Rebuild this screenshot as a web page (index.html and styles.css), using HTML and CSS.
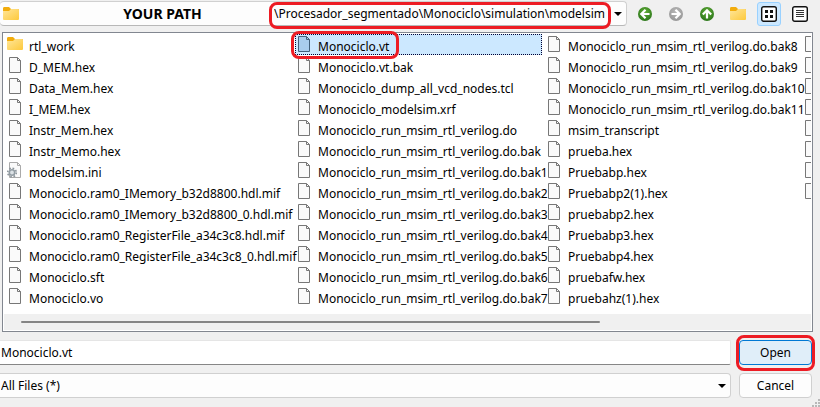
FILE: index.html
```
<!DOCTYPE html>
<html lang="en">
<head>
<meta charset="utf-8">
<title>Open file</title>
<link rel="stylesheet" href="styles.css">
</head>
<body>
<svg class="sprite" aria-hidden="true">
  <defs>
    <linearGradient id="gold" x1="0" y1="0" x2="1" y2="1"><stop offset="0" stop-color="#ffe69a"/><stop offset="1" stop-color="#fdc93c"/></linearGradient>
    <radialGradient id="green" cx=".5" cy=".35" r=".6"><stop offset="0" stop-color="#62ae38"/><stop offset="1" stop-color="#2f7a1c"/></radialGradient>
    <radialGradient id="gray" cx=".5" cy=".35" r=".6"><stop offset="0" stop-color="#b8b8b8"/><stop offset="1" stop-color="#9a9a9a"/></radialGradient>
  </defs>
  <symbol id="folder" viewBox="0 0 16 16"><path d="M0 2.500Q0 1 1 1H6L8 3H15Q16 3 16 4V7H0Z" fill="#f2ac0c"/><path d="M0 5H6L8 3H15Q16 3 16 4V13Q16 14 15 14H1Q0 14 0 13Z" fill="url(#gold)"/></symbol>
  <symbol id="file" viewBox="0 0 16 16"><path d="M2.500 .5H10.500L13.500 3.500V15.500H2.500Z" fill="#fafafa" stroke="#777" stroke-width="1"/><path d="M10.500 .5V3.500H13.500" fill="none" stroke="#777"/></symbol>
  <symbol id="file-selected" viewBox="0 0 16 16"><path d="M2.500 .5H10.500L13.500 3.500V15.500H2.500Z" fill="#a9cdee" stroke="#42607c"/><path d="M10.500 .5V3.500H13.500" fill="none" stroke="#42607c"/></symbol>
  <symbol id="ini" viewBox="0 0 16 16"><path d="M2.500 .5H10.500L13.500 3.500V15.500H2.500Z" fill="#fafafa" stroke="#aaa"/><path d="M10.500 .5V3.500H13.500" fill="none" stroke="#aaa"/><circle cx="5" cy="10.500" r="4.300" fill="none" stroke="#8b949b" stroke-width="1.600" stroke-dasharray="1.700 1.680"/><circle cx="5" cy="10.500" r="2.700" fill="#dce2e6" stroke="#929ca3" stroke-width="1.600"/></symbol>
  <symbol id="back" viewBox="0 0 16 16"><circle cx="8" cy="8" r="7" fill="url(#green)"/><path d="M12.500 8H4.500M8.500 3.800L4.300 8L8.500 12.200" fill="none" stroke="#fff" stroke-width="2.200"/></symbol>
  <symbol id="forward" viewBox="0 0 16 16"><circle cx="8" cy="8" r="7" fill="url(#gray)"/><path d="M3.500 8H11.500M7.500 3.800L11.700 8L7.500 12.200" fill="none" stroke="#fff" stroke-width="2.200"/></symbol>
  <symbol id="up" viewBox="0 0 16 16"><circle cx="8" cy="8" r="7" fill="url(#green)"/><path d="M8 12.500V4.500M3.800 8.500L8 4.300L12.200 8.500" fill="none" stroke="#fff" stroke-width="2.200"/></symbol>
  <symbol id="grid" viewBox="0 0 16 16"><rect x=".7" y=".7" width="14.600" height="14.600" rx="2" fill="#fff" stroke="#111" stroke-width="1.400"/><path d="M4 4h3v3H4zM9 4h3v3H9zM4 9h3v3H4zM9 9h3v3H9z" fill="#111"/></symbol>
  <symbol id="lines" viewBox="0 0 16 16"><rect x=".7" y=".7" width="14.600" height="14.600" rx="2" fill="#fff" stroke="#111" stroke-width="1.400"/><path d="M4 4.500h8M4 6.500h8M4 8.500h8M4 10.500h8" stroke="#333"/></symbol>
  <symbol id="arrow" viewBox="0 0 8 4"><path d="M0 0H8L4 4Z" fill="#000"/></symbol>
</svg>
<form class="dialog">
  <div class="toolbar">
    <div class="lookin">
      <svg class="icon"><use href="#folder"/></svg>
      <label for="path">YOUR PATH</label>
      <div class="path marked">
        <select id="path"><option>\Procesador_segmentado\Monociclo\simulation\modelsim</option></select>
      </div>
      <svg class="arrow"><use href="#arrow"/></svg>
    </div>
    <div class="tools">
      <button type="button" aria-label="Back"><svg class="icon"><use href="#back"/></svg></button>
      <button type="button" aria-label="Forward"><svg class="icon"><use href="#forward"/></svg></button>
      <button type="button" aria-label="Parent directory"><svg class="icon"><use href="#up"/></svg></button>
      <button type="button" aria-label="New folder"><svg class="icon"><use href="#folder"/></svg></button>
      <button type="button" class="active" aria-label="List view"><svg class="icon"><use href="#grid"/></svg></button>
      <button type="button" aria-label="Detail view"><svg class="icon"><use href="#lines"/></svg></button>
    </div>
  </div>
  <div class="files">
    <div class="columns">
      <ul>
        <li><svg class="icon"><use href="#folder"/></svg>rtl_work</li>
        <li><svg class="icon"><use href="#file"/></svg>D_MEM.hex</li>
        <li><svg class="icon"><use href="#file"/></svg>Data_Mem.hex</li>
        <li><svg class="icon"><use href="#file"/></svg>I_MEM.hex</li>
        <li><svg class="icon"><use href="#file"/></svg>Instr_Mem.hex</li>
        <li><svg class="icon"><use href="#file"/></svg>Instr_Memo.hex</li>
        <li><svg class="icon"><use href="#ini"/></svg>modelsim.ini</li>
        <li><svg class="icon"><use href="#file"/></svg>Monociclo.ram0_IMemory_b32d8800.hdl.mif</li>
        <li><svg class="icon"><use href="#file"/></svg>Monociclo.ram0_IMemory_b32d8800_0.hdl.mif</li>
        <li><svg class="icon"><use href="#file"/></svg>Monociclo.ram0_RegisterFile_a34c3c8.hdl.mif</li>
        <li><svg class="icon"><use href="#file"/></svg>Monociclo.ram0_RegisterFile_a34c3c8_0.hdl.mif</li>
        <li><svg class="icon"><use href="#file"/></svg>Monociclo.sft</li>
        <li><svg class="icon"><use href="#file"/></svg>Monociclo.vo</li>
      </ul>
      <ul>
        <li class="selected"><span class="hit marked"><svg class="icon"><use href="#file-selected"/></svg>Monociclo.vt</span></li>
        <li><svg class="icon"><use href="#file"/></svg>Monociclo.vt.bak</li>
        <li><svg class="icon"><use href="#file"/></svg>Monociclo_dump_all_vcd_nodes.tcl</li>
        <li><svg class="icon"><use href="#file"/></svg>Monociclo_modelsim.xrf</li>
        <li><svg class="icon"><use href="#file"/></svg>Monociclo_run_msim_rtl_verilog.do</li>
        <li><svg class="icon"><use href="#file"/></svg>Monociclo_run_msim_rtl_verilog.do.bak</li>
        <li><svg class="icon"><use href="#file"/></svg>Monociclo_run_msim_rtl_verilog.do.bak1</li>
        <li><svg class="icon"><use href="#file"/></svg>Monociclo_run_msim_rtl_verilog.do.bak2</li>
        <li><svg class="icon"><use href="#file"/></svg>Monociclo_run_msim_rtl_verilog.do.bak3</li>
        <li><svg class="icon"><use href="#file"/></svg>Monociclo_run_msim_rtl_verilog.do.bak4</li>
        <li><svg class="icon"><use href="#file"/></svg>Monociclo_run_msim_rtl_verilog.do.bak5</li>
        <li><svg class="icon"><use href="#file"/></svg>Monociclo_run_msim_rtl_verilog.do.bak6</li>
        <li><svg class="icon"><use href="#file"/></svg>Monociclo_run_msim_rtl_verilog.do.bak7</li>
      </ul>
      <ul>
        <li><svg class="icon"><use href="#file"/></svg>Monociclo_run_msim_rtl_verilog.do.bak8</li>
        <li><svg class="icon"><use href="#file"/></svg>Monociclo_run_msim_rtl_verilog.do.bak9</li>
        <li><svg class="icon"><use href="#file"/></svg>Monociclo_run_msim_rtl_verilog.do.bak10</li>
        <li><svg class="icon"><use href="#file"/></svg>Monociclo_run_msim_rtl_verilog.do.bak11</li>
        <li><svg class="icon"><use href="#file"/></svg>msim_transcript</li>
        <li><svg class="icon"><use href="#file"/></svg>prueba.hex</li>
        <li><svg class="icon"><use href="#file"/></svg>Pruebabp.hex</li>
        <li><svg class="icon"><use href="#file"/></svg>Pruebabp2(1).hex</li>
        <li><svg class="icon"><use href="#file"/></svg>pruebabp2.hex</li>
        <li><svg class="icon"><use href="#file"/></svg>Pruebabp3.hex</li>
        <li><svg class="icon"><use href="#file"/></svg>Pruebabp4.hex</li>
        <li><svg class="icon"><use href="#file"/></svg>pruebafw.hex</li>
        <li><svg class="icon"><use href="#file"/></svg>pruebahz(1).hex</li>
      </ul>
      <ul class="cut">
        <li><svg class="icon"><use href="#file"/></svg></li>
        <li><svg class="icon"><use href="#file"/></svg></li>
        <li><svg class="icon"><use href="#file"/></svg></li>
        <li><svg class="icon"><use href="#file"/></svg></li>
        <li><svg class="icon"><use href="#file"/></svg></li>
        <li><svg class="icon"><use href="#file"/></svg></li>
        <li><svg class="icon"><use href="#file"/></svg></li>
        <li><svg class="icon"><use href="#file"/></svg></li>
      </ul>
    </div>
    <div class="scrollbar"><div class="thumb"></div></div>
  </div>
  <div class="row">
    <input class="name" type="text" aria-label="File name" value="Monociclo.vt">
    <span class="action marked"><button type="submit" class="push primary">Open</button></span>
  </div>
  <div class="row">
    <div class="filter">
      <select aria-label="Files of type"><option>All Files (*)</option></select>
      <svg class="arrow"><use href="#arrow"/></svg>
    </div>
    <span class="action"><button type="button" class="push">Cancel</button></span>
  </div>
  <svg class="grip" viewBox="0 0 8 8" aria-hidden="true"><path d="M6 0h2v2H6zM3 3h2v2H3zM6 3h2v2H6zM0 6h2v2H0zM3 6h2v2H3zM6 6h2v2H6z" fill="#b8b8b8"/></svg>
</form>
</body>
</html>
```
FILE: styles.css
```
* { box-sizing: border-box; }

body {
  margin: 0;
  background: #f0f0f0;
  color: #000;
  font: 12px/20px "Noto Sans", sans-serif;
}

button, select, input {
  margin: 0;
  padding: 0;
  border: 0;
  background: none;
  color: inherit;
  font: inherit;
  appearance: none;
}

.sprite { position: absolute; width: 0; height: 0; }
.icon { display: block; flex: none; width: 16px; height: 16px; }
.arrow { flex: none; width: 8px; height: 4px; pointer-events: none; }

.dialog { position: relative; min-height: 100vh; overflow: hidden; }

.toolbar { display: flex; align-items: center; padding-top: 1px; }

.lookin {
  display: flex;
  flex: 1;
  align-items: center;
  height: 25px;
  padding: 0 4px 0 3px;
  border: 1px solid #d0d0d0;
  border-left: 0;
  border-bottom-color: #b8b8b8;
  border-radius: 4px;
  background: #fdfdfd;
}

.lookin label {
  flex: 1;
  padding-left: 32px;
  font-size: 14px;
  font-weight: 700;
  text-align: center;
}

.path { margin-right: 8px; }
.path select { display: block; height: 20px; }

/* Hand-drawn style highlight around an element */
.marked { position: relative; }
.marked::after {
  content: "";
  position: absolute;
  inset: -2px -5px -5px;
  z-index: 1;
  border: 3px solid #ed1c24;
  border-radius: 8px;
  pointer-events: none;
}

.tools { display: flex; gap: 7px; padding: 0 8px 0 6px; }
.tools button {
  display: grid;
  place-items: center;
  width: 24px;
  height: 24px;
  border-radius: 3px;
}
.tools .active { border: 1px solid #99d1ff; background: #cce8ff; }

.files {
  margin: 6px 7px 8px 2px;
  padding: 1px;
  border: 1px solid #828790;
  background: #fff;
}

.columns {
  display: grid;
  grid-template-columns: 289px 250px 257px minmax(0, 1fr);
  height: 280px;
  padding: 0 0 0 2px;
}
.columns ul { min-width: 0; margin: 0; padding: 0; list-style: none; }
.columns .cut { overflow: hidden; }
.columns li { display: flex; gap: 6px; height: 21px; padding: 2px 1px 0; line-height: 22px; white-space: nowrap; }
.columns .selected { margin-right: 3px; outline: 1px dotted #003; outline-offset: -1px; background: #cce8ff; }
.hit { display: flex; gap: 6px; height: 18px; }
.hit.marked::after { inset: -5px -10px -5px -5px; }

.scrollbar { padding: 7px 211px 7px 17px; background: #f0f0f0; }
.thumb { height: 2px; border-radius: 1px; background: #858585; }

.row { display: flex; gap: 8px; margin-bottom: 8px; padding-right: 8px; }

.name {
  flex: 1;
  height: 25px;
  padding: 0 1px;
  border: 1px solid #e5e5e5;
  border-left: 0;
  border-bottom-color: #868686;
  border-radius: 0 2px 2px 0;
  background: #fff;
}

.filter {
  display: flex;
  flex: 1;
  align-items: center;
  height: 25px;
  padding-right: 4px;
  border: 1px solid #d0d0d0;
  border-left: 0;
  border-radius: 0 4px 4px 0;
  background: #fdfdfd;
}
.filter select { flex: 1; height: 23px; padding: 0 1px; }

.action { width: 73px; }
.action.marked::after { inset: -5px -3px -6px; }
.push {
  display: block;
  width: 100%;
  height: 25px;
  border: 1px solid #d0d0d0;
  border-radius: 4px;
  background: #fdfdfd;
}
.primary { border-color: #0078d4; background: #e0eef9; }

.grip { position: absolute; right: 0; bottom: 0; width: 8px; height: 8px; }
```
